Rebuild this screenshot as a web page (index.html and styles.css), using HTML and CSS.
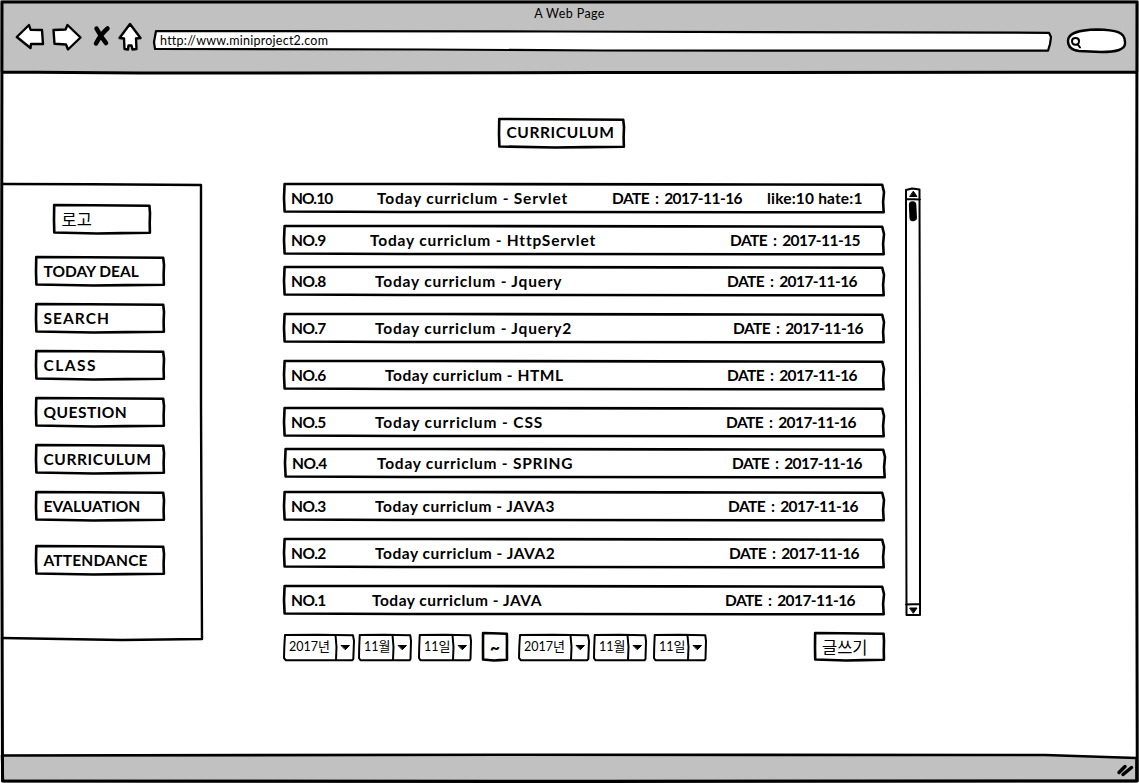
FILE: index.html
```html
<!DOCTYPE html>
<html lang="ko">
<head>
<meta charset="utf-8">
<title>A Web Page</title>
<link rel="stylesheet" href="styles.css">
</head>
<body>
<svg width="0" height="0" class="defs" aria-hidden="true">
  <symbol id="box" viewBox="0 0 100 28" preserveAspectRatio="none"><path d="M.2 0L40 .2L99.400 .8L100 8L99.700 18L99.900 27.800L70 28.100L45 28.500L.3 27.500L0 15Z"/></symbol>
  <symbol id="wide" viewBox="0 0 100 28" preserveAspectRatio="none"><path d="M.1 0L25 0L65 .4L99.700 .7L100 8L99.850 18L99.950 28.300L45 28L20 28L.1 27.500L0 14Z"/></symbol>
  <symbol id="combo" viewBox="0 0 71 25" preserveAspectRatio="none"><path class="thin" d="M1 0L35 -.3L70 .3L71 6L70.300 24L69 25.300L2 25.300L0 23L.3 12Z"/></symbol>
</svg>
<div class="window">
  <header class="chrome">
    <div class="page-title">A Web Page</div>
    <div class="toolbar">
      <svg class="nav" width="128" height="30" viewBox="14 22 128 30">
        <path class="shape" d="M16.800 37L29 25L30.500 29.700L42 30L43 44L31 44L30.500 48Z"/>
        <path class="shape" d="M53.500 30L65.500 29.500L67.500 25L80.500 37.500L68 49.500L66 44.500L54.500 43.800Z"/>
        <path class="cross" d="M96.500 28.500Q101 37 106 43M107.500 28.500Q101 34 96 43.500"/>
        <path class="shape" d="M130 24L140.500 38L136 38.500L136.500 49L132.500 49.500L131.500 45.500L128.500 45.500L128 49.500L124.500 49L124 38.500L119.500 38Z"/>
      </svg>
      <div class="address">
        <svg class="outline" viewBox="0 0 897 19" preserveAspectRatio="none"><path class="white" d="M2 0L400 .5L895 1.800L897 6L896 13L894 19.700L450 19.500L270 18.500L1 18L0 11Z"/></svg>
        <span>http://www.miniproject2.com</span>
      </div>
      <svg class="search" width="62" height="28" viewBox="1065 27 62 28">
        <path class="shape" d="M1068 41C1068 33 1078 30 1097 29.500C1116 30 1125 32 1125 42C1126 50 1116 52 1101 52L1079 51C1070 50 1068 46 1068 41Z"/>
        <path class="lens" d="M1072 41C1072 37 1079 37 1079 41C1079 46 1072 46 1072 41M1077.500 44L1080 47.500"/>
      </svg>
    </div>
  </header>
  <main class="page">
    <nav class="sidebar">
      <svg class="outline" viewBox="0 0 200 455" preserveAspectRatio="none"><path class="panel" d="M0 0L90 .3L199 1L199 220L200 455L120 456L0 454"/></svg>
      <a class="item logo"><svg class="outline"><use href="#box"/></svg><span class="ko">로고</span></a>
      <a class="item tight"><svg class="outline"><use href="#box"/></svg><span>TODAY DEAL</span></a>
      <a class="item loose"><svg class="outline"><use href="#box"/></svg><span>SEARCH</span></a>
      <a class="item looser"><svg class="outline"><use href="#box"/></svg><span>CLASS</span></a>
      <a class="item"><svg class="outline"><use href="#box"/></svg><span>QUESTION</span></a>
      <a class="item even"><svg class="outline"><use href="#box"/></svg><span>CURRICULUM</span></a>
      <a class="item tight"><svg class="outline"><use href="#box"/></svg><span>EVALUATION</span></a>
      <a class="item last"><svg class="outline"><use href="#box"/></svg><span>ATTENDANCE</span></a>
    </nav>
    <section class="content">
      <h1 class="heading even"><svg class="outline"><use href="#box"/></svg><span>CURRICULUM</span></h1>
      <div class="board">
        <div class="list">
          <div class="row r10"><svg class="outline"><use href="#wide"/></svg><span class="no">NO.10</span><span class="title">Today curriclum - Servlet</span><span class="date">DATE : 2017-11-16</span><span class="votes">like:10 hate:1</span></div>
          <div class="row r9"><svg class="outline"><use href="#wide"/></svg><span class="no">NO.9</span><span class="title">Today curriclum - HttpServlet</span><span class="date">DATE : 2017-11-15</span></div>
          <div class="row r8"><svg class="outline"><use href="#wide"/></svg><span class="no">NO.8</span><span class="title">Today curriclum - Jquery</span><span class="date">DATE : 2017-11-16</span></div>
          <div class="row r7"><svg class="outline"><use href="#wide"/></svg><span class="no">NO.7</span><span class="title">Today curriclum - Jquery2</span><span class="date">DATE : 2017-11-16</span></div>
          <div class="row r6"><svg class="outline"><use href="#wide"/></svg><span class="no">NO.6</span><span class="title">Today curriclum - HTML</span><span class="date">DATE : 2017-11-16</span></div>
          <div class="row r5"><svg class="outline"><use href="#wide"/></svg><span class="no">NO.5</span><span class="title">Today curriclum - CSS</span><span class="date">DATE : 2017-11-16</span></div>
          <div class="row r4"><svg class="outline"><use href="#wide"/></svg><span class="no">NO.4</span><span class="title">Today curriclum - SPRING</span><span class="date">DATE : 2017-11-16</span></div>
          <div class="row r3"><svg class="outline"><use href="#wide"/></svg><span class="no">NO.3</span><span class="title">Today curriclum - JAVA3</span><span class="date">DATE : 2017-11-16</span></div>
          <div class="row r2"><svg class="outline"><use href="#wide"/></svg><span class="no">NO.2</span><span class="title">Today curriclum - JAVA2</span><span class="date">DATE : 2017-11-16</span></div>
          <div class="row r1"><svg class="outline"><use href="#wide"/></svg><span class="no">NO.1</span><span class="title">Today curriclum - JAVA</span><span class="date">DATE : 2017-11-16</span></div>
        </div>
        <svg class="scrollbar" width="18" height="430" viewBox="904 187 18 430">
          <path class="thin" d="M906 190L912 188.500L919.500 189.500L920 400L920 615L906.500 615L906 400ZM906 199L920 199.500M906 604.500L920 604"/>
          <path class="solid" d="M913.500 191.500L917 196.500L910 196.500ZM910 608L917 608L913.500 613Z"/>
          <path class="thumb" d="M912.600 205L913.200 217.500"/>
        </svg>
      </div>
      <div class="filters">
        <div class="combo year"><svg class="outline"><use href="#combo"/></svg><span>2017<b>년</b></span><i><svg width="18" height="25"><path class="thin" d="M-.5 0L.5 12L0 25"/><path class="solid" d="M5.500 10.500H13.500L9.500 14.500Z"/></svg></i></div>
        <div class="combo month"><svg class="outline"><use href="#combo"/></svg><span>11<b>월</b></span><i><svg width="18" height="25"><path class="thin" d="M-.5 0L.5 12L0 25"/><path class="solid" d="M5.500 10.500H13.500L9.500 14.500Z"/></svg></i></div>
        <div class="combo day"><svg class="outline"><use href="#combo"/></svg><span>11<b>일</b></span><i><svg width="18" height="25"><path class="thin" d="M-.5 0L.5 12L0 25"/><path class="solid" d="M5.500 10.500H13.500L9.500 14.500Z"/></svg></i></div>
        <div class="tilde"><svg class="outline"><use href="#box"/></svg><span>~</span></div>
        <div class="combo year"><svg class="outline"><use href="#combo"/></svg><span>2017<b>년</b></span><i><svg width="18" height="25"><path class="thin" d="M-.5 0L.5 12L0 25"/><path class="solid" d="M5.500 10.500H13.500L9.500 14.500Z"/></svg></i></div>
        <div class="combo month"><svg class="outline"><use href="#combo"/></svg><span>11<b>월</b></span><i><svg width="18" height="25"><path class="thin" d="M-.5 0L.5 12L0 25"/><path class="solid" d="M5.500 10.500H13.500L9.500 14.500Z"/></svg></i></div>
        <div class="combo day"><svg class="outline"><use href="#combo"/></svg><span>11<b>일</b></span><i><svg width="18" height="25"><path class="thin" d="M-.5 0L.5 12L0 25"/><path class="solid" d="M5.500 10.500H13.500L9.500 14.500Z"/></svg></i></div>
        <div class="write"><svg class="outline"><use href="#box"/></svg><span class="ko">글쓰기</span></div>
      </div>
    </section>
  </main>
  <footer class="status">
    <svg width="1139" height="31" viewBox="0 752 1139 31">
      <path class="bar" d="M2 755.500L500 754.800L1045 755L1136.500 758V781H3Z"/>
      <path class="grip" d="M1119 772.500L1125 766.500M1123 774.500L1131.500 767.500"/>
    </svg>
  </footer>
  <svg class="frame" width="1139" height="783" viewBox="0 0 1139 783"><path d="M2 2L1137 2L1136.500 400L1137.300 781L600 781.500L2.500 781L1.500 400ZM2 72L140 73L600 72.600L1136 72.300"/></svg>
</div>
</body>
</html>
```

FILE: styles.css
```css
* { box-sizing: border-box; }
body { margin: 0; background: #fff; color: #000; font-family: Lato, "Noto Sans CJK KR", sans-serif; }
.defs { position: absolute; }
.window { position: relative; width: 1139px; height: 783px; display: flex; flex-direction: column; overflow: hidden; }
path { fill: none; stroke: #000; stroke-width: 2.600px; stroke-linejoin: round; stroke-linecap: round; vector-effect: non-scaling-stroke; }
.outline { position: absolute; left: 0; top: 0; width: 100%; height: 100%; overflow: visible; }
.outline use { overflow: visible; }
symbol { overflow: visible; }
.outline ~ span { position: relative; white-space: nowrap; }
.frame { position: absolute; left: 0; top: 0; pointer-events: none; }
.frame path { stroke-width: 3px; }

.chrome { height: 72px; background: #c1c1c1; padding-top: 6px; }
.page-title { height: 16px; line-height: 16px; text-align: center; font-size: 12.500px; letter-spacing: .4px; }
.toolbar { display: flex; padding-left: 14px; }
.nav { display: block; }
.shape { fill: #fff; stroke-width: 2.400px; }
.white { fill: #fff; stroke-width: 2.200px; }
.cross { stroke-width: 4.500px; }
.address { position: relative; width: 897px; height: 19px; margin: 9px 0 0 12px; padding-left: 6px; font-size: 12.500px; line-height: 19px; letter-spacing: .24px; }
.search { margin: 5px 0 0 14px; }
.lens { stroke-width: 2px; }

.page { display: flex; height: 680px; }
.sidebar { position: relative; width: 200px; height: 455px; margin: 112px 0 0 2px; padding: 73px 0 0 34px; display: flex; flex-direction: column; gap: 19px; }
.panel { stroke-width: 2.400px; }
.item { position: relative; width: 128px; height: 28px; flex: none; padding-left: 7.500px; line-height: 29px; font-size: 15.500px; font-weight: 700; letter-spacing: .5px; }
.tight { letter-spacing: .02px; }
.loose { letter-spacing: 1.050px; }
.looser { letter-spacing: 1.500px; }
.even { letter-spacing: .6px; }
.logo { width: 96px; margin: -52px 0 5px 18px; }
.last { margin-top: 7px; letter-spacing: .17px; }
.ko { font-family: "Noto Sans CJK KR", sans-serif; font-weight: 400; font-size: 16.500px; letter-spacing: 0; }

.content { padding: 46.500px 0 0 82px; width: 740px; }
.heading { position: relative; width: 125px; height: 28px; margin: 0 0 37.500px 215px; padding-left: 7.500px; line-height: 27px; font-size: 15.500px; }
.board { display: flex; gap: 20px; height: 430px; }
.list { width: 600px; flex: none; }
.row { position: relative; height: 28px; display: flex; padding-left: 7px; font-size: 15.500px; line-height: 29px; font-weight: 700; }
.no { width: 79px; flex: none; letter-spacing: -.5px; }
.title { letter-spacing: .8px; word-spacing: 0; }
.date { width: 131px; margin-left: auto; flex: none; letter-spacing: -.56px; word-spacing: 2.600px; }
.votes { width: 96px; margin: 0 21px 0 24px; letter-spacing: .18px; }
.r10 { margin-bottom: 14px; } .r10 .title { margin-left: 7px; } .r10 .no { letter-spacing: -.9px; }
.r9 { margin-bottom: 13px; } .r9 .date { margin-right: 23px; }
.r8 { margin-bottom: 19px; } .r8 .title { margin-left: 5px; } .r8 .date { margin-right: 26px; }
.r7 { margin-bottom: 19px; } .r7 .title { margin-left: 5px; } .r7 .date { margin-right: 20px; }
.r6 { margin-bottom: 19px; } .r6 .title { margin-left: 15px; letter-spacing: .56px; } .r6 .date { margin-right: 26px; }
.r5 { margin-bottom: 13px; } .r5 .title { margin-left: 5px; letter-spacing: .88px; } .r5 .date { margin-right: 27px; }
.r4 { margin-bottom: 15px; left: 1px; } .r4 .title { margin-left: 6px; letter-spacing: .75px; } .r4 .date { margin-right: 22px; }
.r3 { margin-bottom: 19px; } .r3 .title { margin-left: 5px; letter-spacing: .52px; } .r3 .date { margin-right: 25px; }
.r2 { margin-bottom: 19px; } .r2 .title { margin-left: 5px; letter-spacing: .54px; } .r2 .date { margin-right: 24px; }
.r1 .title { margin-left: 2px; letter-spacing: .5px; } .r1 .date { margin-right: 28px; }
.scrollbar { margin-top: 3px; overflow: visible; flex: none; }
.thin { stroke-width: 2px; }
.solid { fill: #000; stroke-width: 1px; }
.thumb { stroke-width: 7.500px; }

.filters { display: flex; width: 600px; margin-top: 19px; }
.combo { position: relative; height: 25px; margin-top: 2px; padding-left: 5px; display: flex; justify-content: space-between; font-size: 12.500px; line-height: 22px; }
.combo b { font-weight: 400; font-size: 13px; }
.combo i { position: relative; width: 18px; height: 25px; }
.combo i svg { display: block; overflow: visible; }
.year { width: 70px; margin-right: 5px; }
.month { width: 52px; margin-right: 8px; }
.day { width: 52px; margin-right: 12px; }
.tilde { position: relative; width: 24px; height: 27px; margin-right: 12px; text-align: center; font-size: 17px; font-weight: 900; line-height: 29px; }
.write { position: relative; width: 69px; height: 27px; margin-left: auto; padding-left: 7px; line-height: 28px; }

.status { height: 31px; }
.status svg { display: block; }
.bar { fill: #c1c1c1; }
.grip { stroke-width: 3.500px; }
```
